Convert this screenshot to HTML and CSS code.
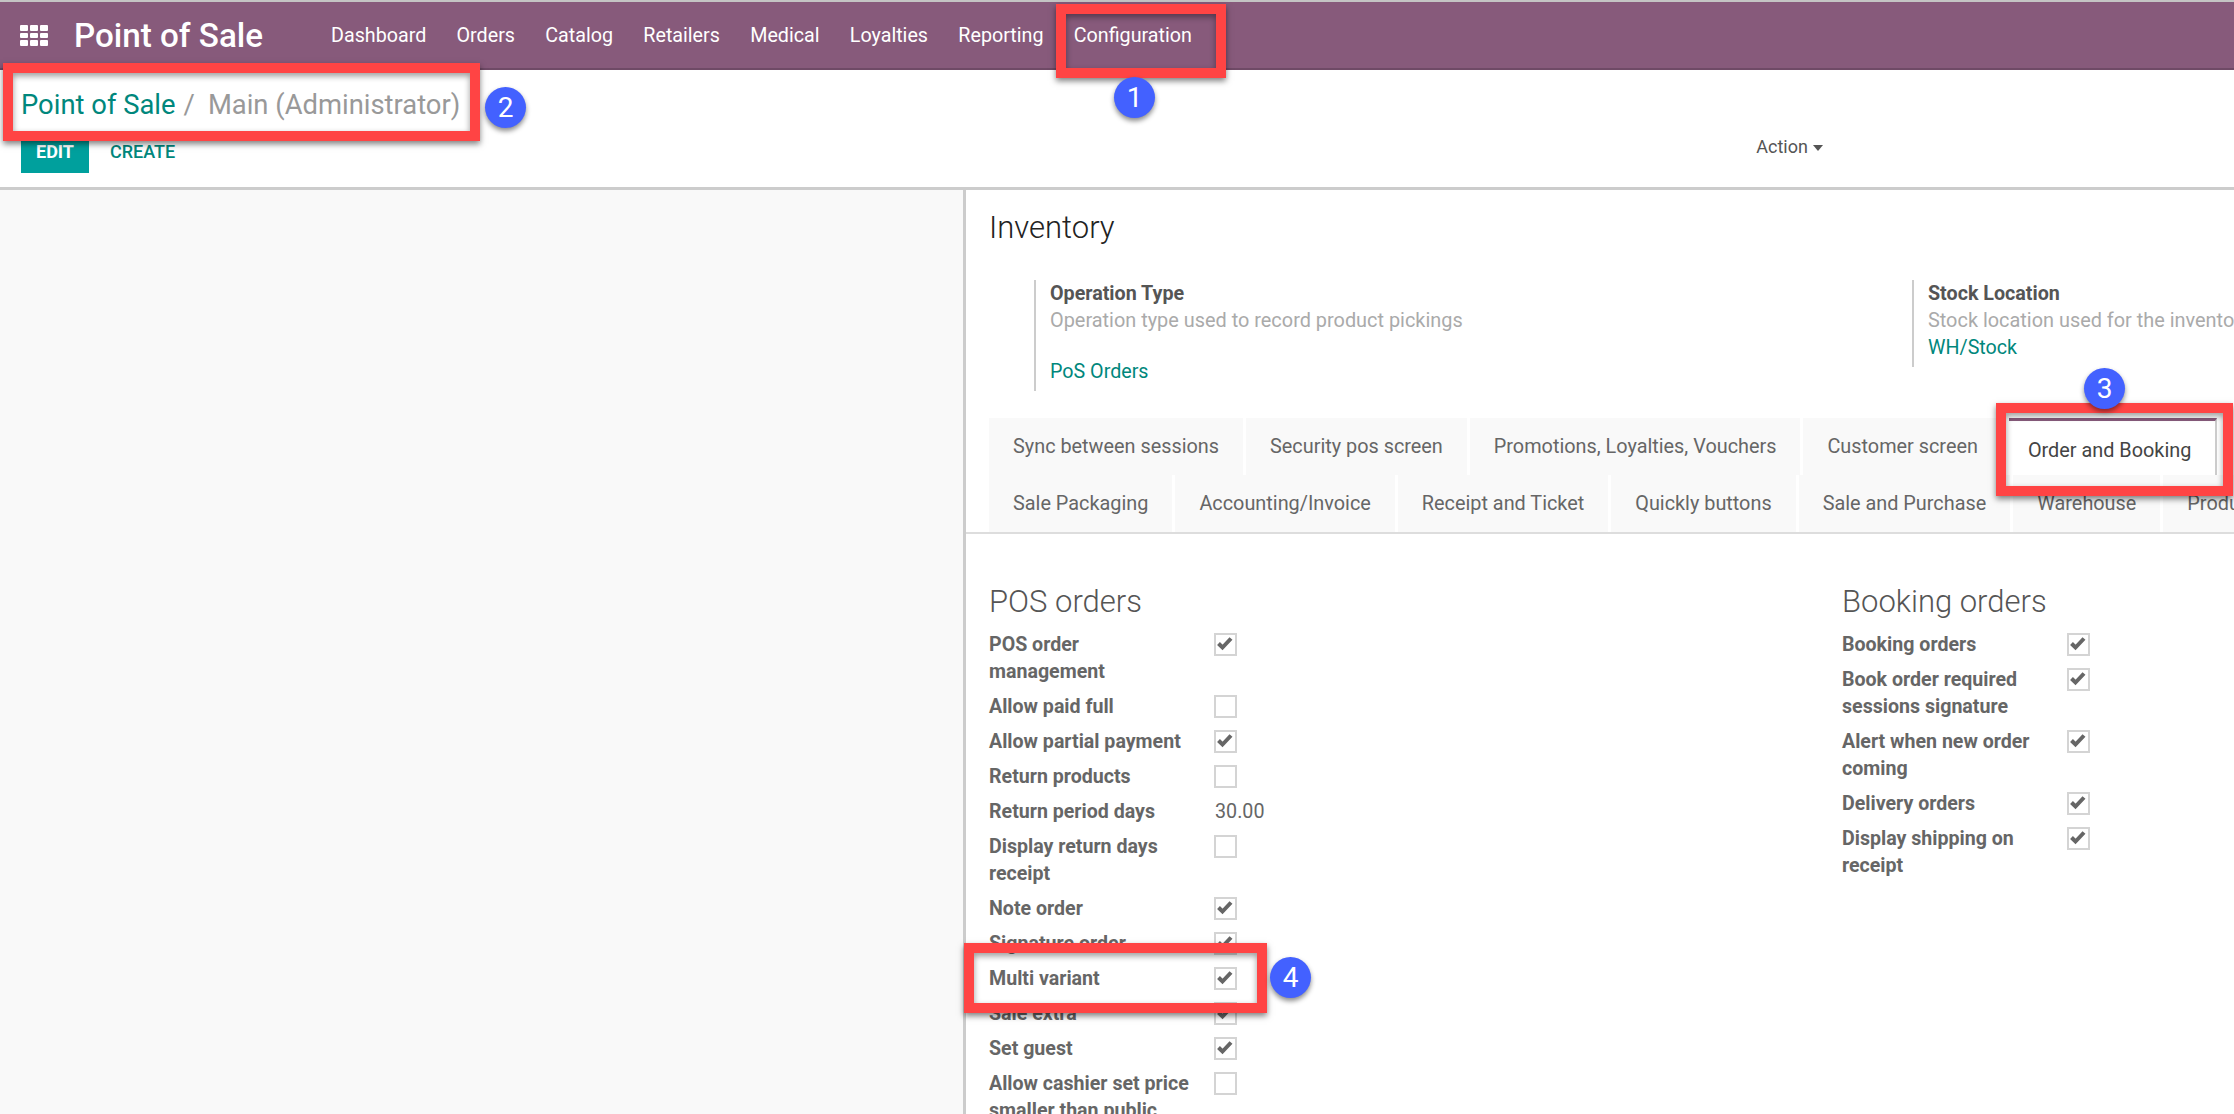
FILE: index.html
```html
<!DOCTYPE html>
<html>
	<head>
		<meta charset="UTF-8">
		<title>Point of Sale</title>
		<link rel="stylesheet" href="styles.css">
	</head>
	<body>
		<svg class="defs" width="0" height="0">
			<symbol id="tick" viewBox="0 0 23 23">
				<polyline points="4.5,10.5 8.5,14.5 17,5.5" fill="none" stroke="#666" stroke-width="4"/>
			</symbol>
		</svg>

		<div class="topbar">
			<svg class="apps" width="28" height="21" viewBox="0 0 28 21" fill="#fff">
				<rect x="0" y="0" width="8" height="6" rx="1"/><rect x="10" y="0" width="8" height="6" rx="1"/><rect x="20" y="0" width="8" height="6" rx="1"/>
				<rect x="0" y="8" width="8" height="5" rx="1"/><rect x="10" y="8" width="8" height="5" rx="1"/><rect x="20" y="8" width="8" height="5" rx="1"/>
				<rect x="0" y="15" width="8" height="6" rx="1"/><rect x="10" y="15" width="8" height="6" rx="1"/><rect x="20" y="15" width="8" height="6" rx="1"/>
			</svg>
			<span class="brand">Point of Sale</span>
			<div class="menu">
				<a>Dashboard</a>
				<a>Orders</a>
				<a>Catalog</a>
				<a>Retailers</a>
				<a>Medical</a>
				<a>Loyalties</a>
				<a>Reporting</a>
				<a>Configuration</a>
			</div>
		</div>

		<div class="panel">
			<div class="crumbs"><a>Point of Sale</a><span class="sep">/</span><span class="current">Main (Administrator)</span></div>
			<div class="panel-row">
				<a class="btn-edit">EDIT</a>
				<a class="btn-create">CREATE</a>
				<a class="action">Action<i class="caret"></i></a>
			</div>
		</div>

		<div class="main">
			<div class="left"></div>
			<div class="sheet">
				<h2 class="inv-title">Inventory</h2>
				<div class="infos">
					<div class="info info-wide">
						<b>Operation Type</b>
						<span class="hint">Operation type used to record product pickings</span>
						<a class="gap">PoS Orders</a>
					</div>
					<div class="info">
						<b>Stock Location</b>
						<span class="hint">Stock location used for the inventory</span>
						<a>WH/Stock</a>
					</div>
				</div>

				<div class="tabs">
					<div class="tab-row">
						<a class="tab">Sync between sessions</a>
						<a class="tab">Security pos screen</a>
						<a class="tab">Promotions, Loyalties, Vouchers</a>
						<a class="tab">Customer screen</a>
						<a class="tab active">Order and Booking</a>
					</div>
					<div class="tab-row">
						<a class="tab">Sale Packaging</a>
						<a class="tab">Accounting/Invoice</a>
						<a class="tab">Receipt and Ticket</a>
						<a class="tab">Quickly buttons</a>
						<a class="tab">Sale and Purchase</a>
						<a class="tab">Warehouse</a>
						<a class="tab">Products</a>
					</div>
				</div>

				<div class="groups">
					<div class="group group-first">
						<h3>POS orders</h3>
						<div class="fields">
							<label>POS order management</label><span class="box"><svg><use href="#tick"/></svg></span>
							<label>Allow paid full</label><span class="box"></span>
							<label>Allow partial payment</label><span class="box"><svg><use href="#tick"/></svg></span>
							<label>Return products</label><span class="box"></span>
							<label>Return period days</label><span class="value">30.00</span>
							<label>Display return days receipt</label><span class="box"></span>
							<label>Note order</label><span class="box"><svg><use href="#tick"/></svg></span>
							<label>Signature order</label><span class="box"><svg><use href="#tick"/></svg></span>
							<label>Multi variant</label><span class="box"><svg><use href="#tick"/></svg></span>
							<label>Sale extra</label><span class="box"><svg><use href="#tick"/></svg></span>
							<label>Set guest</label><span class="box"><svg><use href="#tick"/></svg></span>
							<label>Allow cashier set price smaller than public price</label><span class="box"></span>
						</div>
					</div>
					<div class="group">
						<h3>Booking orders</h3>
						<div class="fields">
							<label>Booking orders</label><span class="box"><svg><use href="#tick"/></svg></span>
							<label>Book order required sessions signature</label><span class="box"><svg><use href="#tick"/></svg></span>
							<label>Alert when new order coming</label><span class="box"><svg><use href="#tick"/></svg></span>
							<label>Delivery orders</label><span class="box"><svg><use href="#tick"/></svg></span>
							<label>Display shipping on receipt</label><span class="box"><svg><use href="#tick"/></svg></span>
						</div>
					</div>
				</div>
			</div>
		</div>

		<!-- callouts drawn over the screenshot -->
		<div class="mark mark-1"></div>
		<div class="mark mark-2"></div>
		<div class="mark mark-3"></div>
		<div class="mark mark-4"></div>
		<div class="badge badge-1">1</div>
		<div class="badge badge-2">2</div>
		<div class="badge badge-3">3</div>
		<div class="badge badge-4">4</div>
	</body>
</html>
```

FILE: styles.css
```css
* {
	margin: 0;
	padding: 0;
	box-sizing: border-box;
}

html, body {
	width: 2234px;
	height: 1114px;
	overflow: hidden;
}

body {
	position: relative;
	font-family: Roboto, "Liberation Sans", sans-serif;
	font-size: 19.7px;
	line-height: 27px;
	color: #666;
	background: #fff;
}

.defs {
	position: absolute;
}

/* top bar */
.topbar {
	height: 70px;
	display: flex;
	align-items: center;
	padding-left: 20px;
	background-color: #875a7b;
	border-top: 2px solid #c4c4c4;
	border-bottom: 2px solid #6f4a66;
	color: #fff;
}

.apps {
	flex: none;
}

.brand {
	margin-left: 26px;
	font-size: 33.2px;
	font-weight: 500;
}

.menu {
	display: flex;
	gap: 30.3px;
	margin-left: 68px;
}

/* control panel */
.panel {
	height: 120px;
	padding: 15px 0 0 21px;
	border-bottom: 3px solid #ccc;
}

.crumbs {
	font-size: 27.4px;
	line-height: 40px;
	color: #999;
}

.crumbs a {
	color: #00877c;
}

.sep {
	margin: 0 13px 0 8px;
}

.panel-row {
	display: flex;
	align-items: flex-start;
	margin-top: 14px;
}

.btn-edit {
	width: 68px;
	height: 34px;
	line-height: 26px;
	text-align: center;
	font-size: 18px;
	font-weight: 700;
	color: #fff;
	background-color: #00a09d;
}

.btn-create {
	margin-left: 21px;
	line-height: 26px;
	font-size: 18px;
	font-weight: 500;
	color: #00877c;
}

.action {
	margin-left: 1581px;
	line-height: 16px;
	font-size: 18px;
	color: #555;
}

.caret {
	display: inline-block;
	margin-left: 5px;
	vertical-align: 2px;
	border-top: 6px solid #555;
	border-left: 5px solid transparent;
	border-right: 5px solid transparent;
}

/* main area */
.main {
	display: flex;
	height: 924px;
}

.left {
	flex: none;
	width: 966px;
	background-color: #f9f9f9;
	border-right: 3px solid #ccc;
}

.sheet {
	flex: 1;
	min-width: 0;
	overflow: hidden;
}

.inv-title {
	margin: 18px 0 0 23px;
	font-size: 31px;
	line-height: 40px;
	font-weight: 300;
	color: #222;
}

.infos {
	display: flex;
	align-items: flex-start;
	margin: 32px 0 0 68px;
	white-space: nowrap;
}

.info {
	display: flex;
	flex-direction: column;
	padding: 0 0 6px 14px;
	border-left: 2px solid #ccc;
}

.info-wide {
	flex: none;
	width: 878px;
}

.info b {
	font-weight: 700;
	color: #555;
}

.hint {
	font-size: 19.9px;
	color: #aaa;
}

.info a {
	color: #00877c;
}

.info a.gap {
	margin-top: 24px;
}

/* tabs */
.tabs {
	margin-top: 27px;
	padding-left: 23px;
	border-bottom: 2px solid #ddd;
}

.tab-row {
	display: flex;
	gap: 3px;
	height: 57px;
	white-space: nowrap;
}

.tab {
	flex: none;
	padding: 1px 24px 0;
	line-height: 56px;
	font-size: 19.85px;
	background-color: #f9f9f9;
	color: #666;
}

.tab.active {
	margin-left: 4px;
	padding-top: 2px;
	padding-left: 19px;
	line-height: 55px;
	background-color: #fff;
	color: #444;
	border-top: 3px solid #875a7b;
	border-right: 2px solid #ccc;
}

/* field groups */
.groups {
	display: flex;
	margin: 48px 0 0 23px;
}

.group-first {
	flex: none;
	width: 853px;
}

.group h3 {
	margin-bottom: 9px;
	font-size: 31px;
	line-height: 40px;
	font-weight: 300;
	color: #555;
}

.fields {
	display: grid;
	grid-template-columns: 225px auto;
	row-gap: 8px;
	justify-content: start;
}

.fields label {
	padding-right: 20px;
	font-size: 19.6px;
	font-weight: 700;
	color: #666;
}

.box {
	display: block;
	width: 23px;
	height: 23px;
	margin-top: 2px;
	border: 2px solid #d4d4d4;
	background: #fff;
}

.box svg {
	display: block;
	width: 23px;
	height: 23px;
	margin: -2px;
}

.value {
	padding-left: 1px;
}

/* callouts */
.mark {
	position: absolute;
	border: 10px solid #ff4444;
	box-shadow: 0 3px 6px rgba(0, 0, 0, 0.5), inset 0 3px 6px rgba(0, 0, 0, 0.4);
}

.mark-1 {
	left: 1056px;
	top: 4px;
	width: 170px;
	height: 74px;
}

.mark-2 {
	left: 3px;
	top: 63px;
	width: 477px;
	height: 78px;
}

.mark-3 {
	left: 1996px;
	top: 403px;
	width: 237px;
	height: 93px;
}

.mark-4 {
	left: 964px;
	top: 943px;
	width: 303px;
	height: 70px;
}

.badge {
	position: absolute;
	width: 41px;
	height: 41px;
	border-radius: 50%;
	background-color: #4361ff;
	box-shadow: 0 3px 5px rgba(0, 0, 0, 0.45);
	color: #fff;
	font-size: 28px;
	line-height: 41px;
	text-align: center;
}

.badge-1 {
	left: 1114px;
	top: 77px;
}

.badge-2 {
	left: 485px;
	top: 87px;
}

.badge-3 {
	left: 2084px;
	top: 368px;
}

.badge-4 {
	left: 1270px;
	top: 957px;
}
```
